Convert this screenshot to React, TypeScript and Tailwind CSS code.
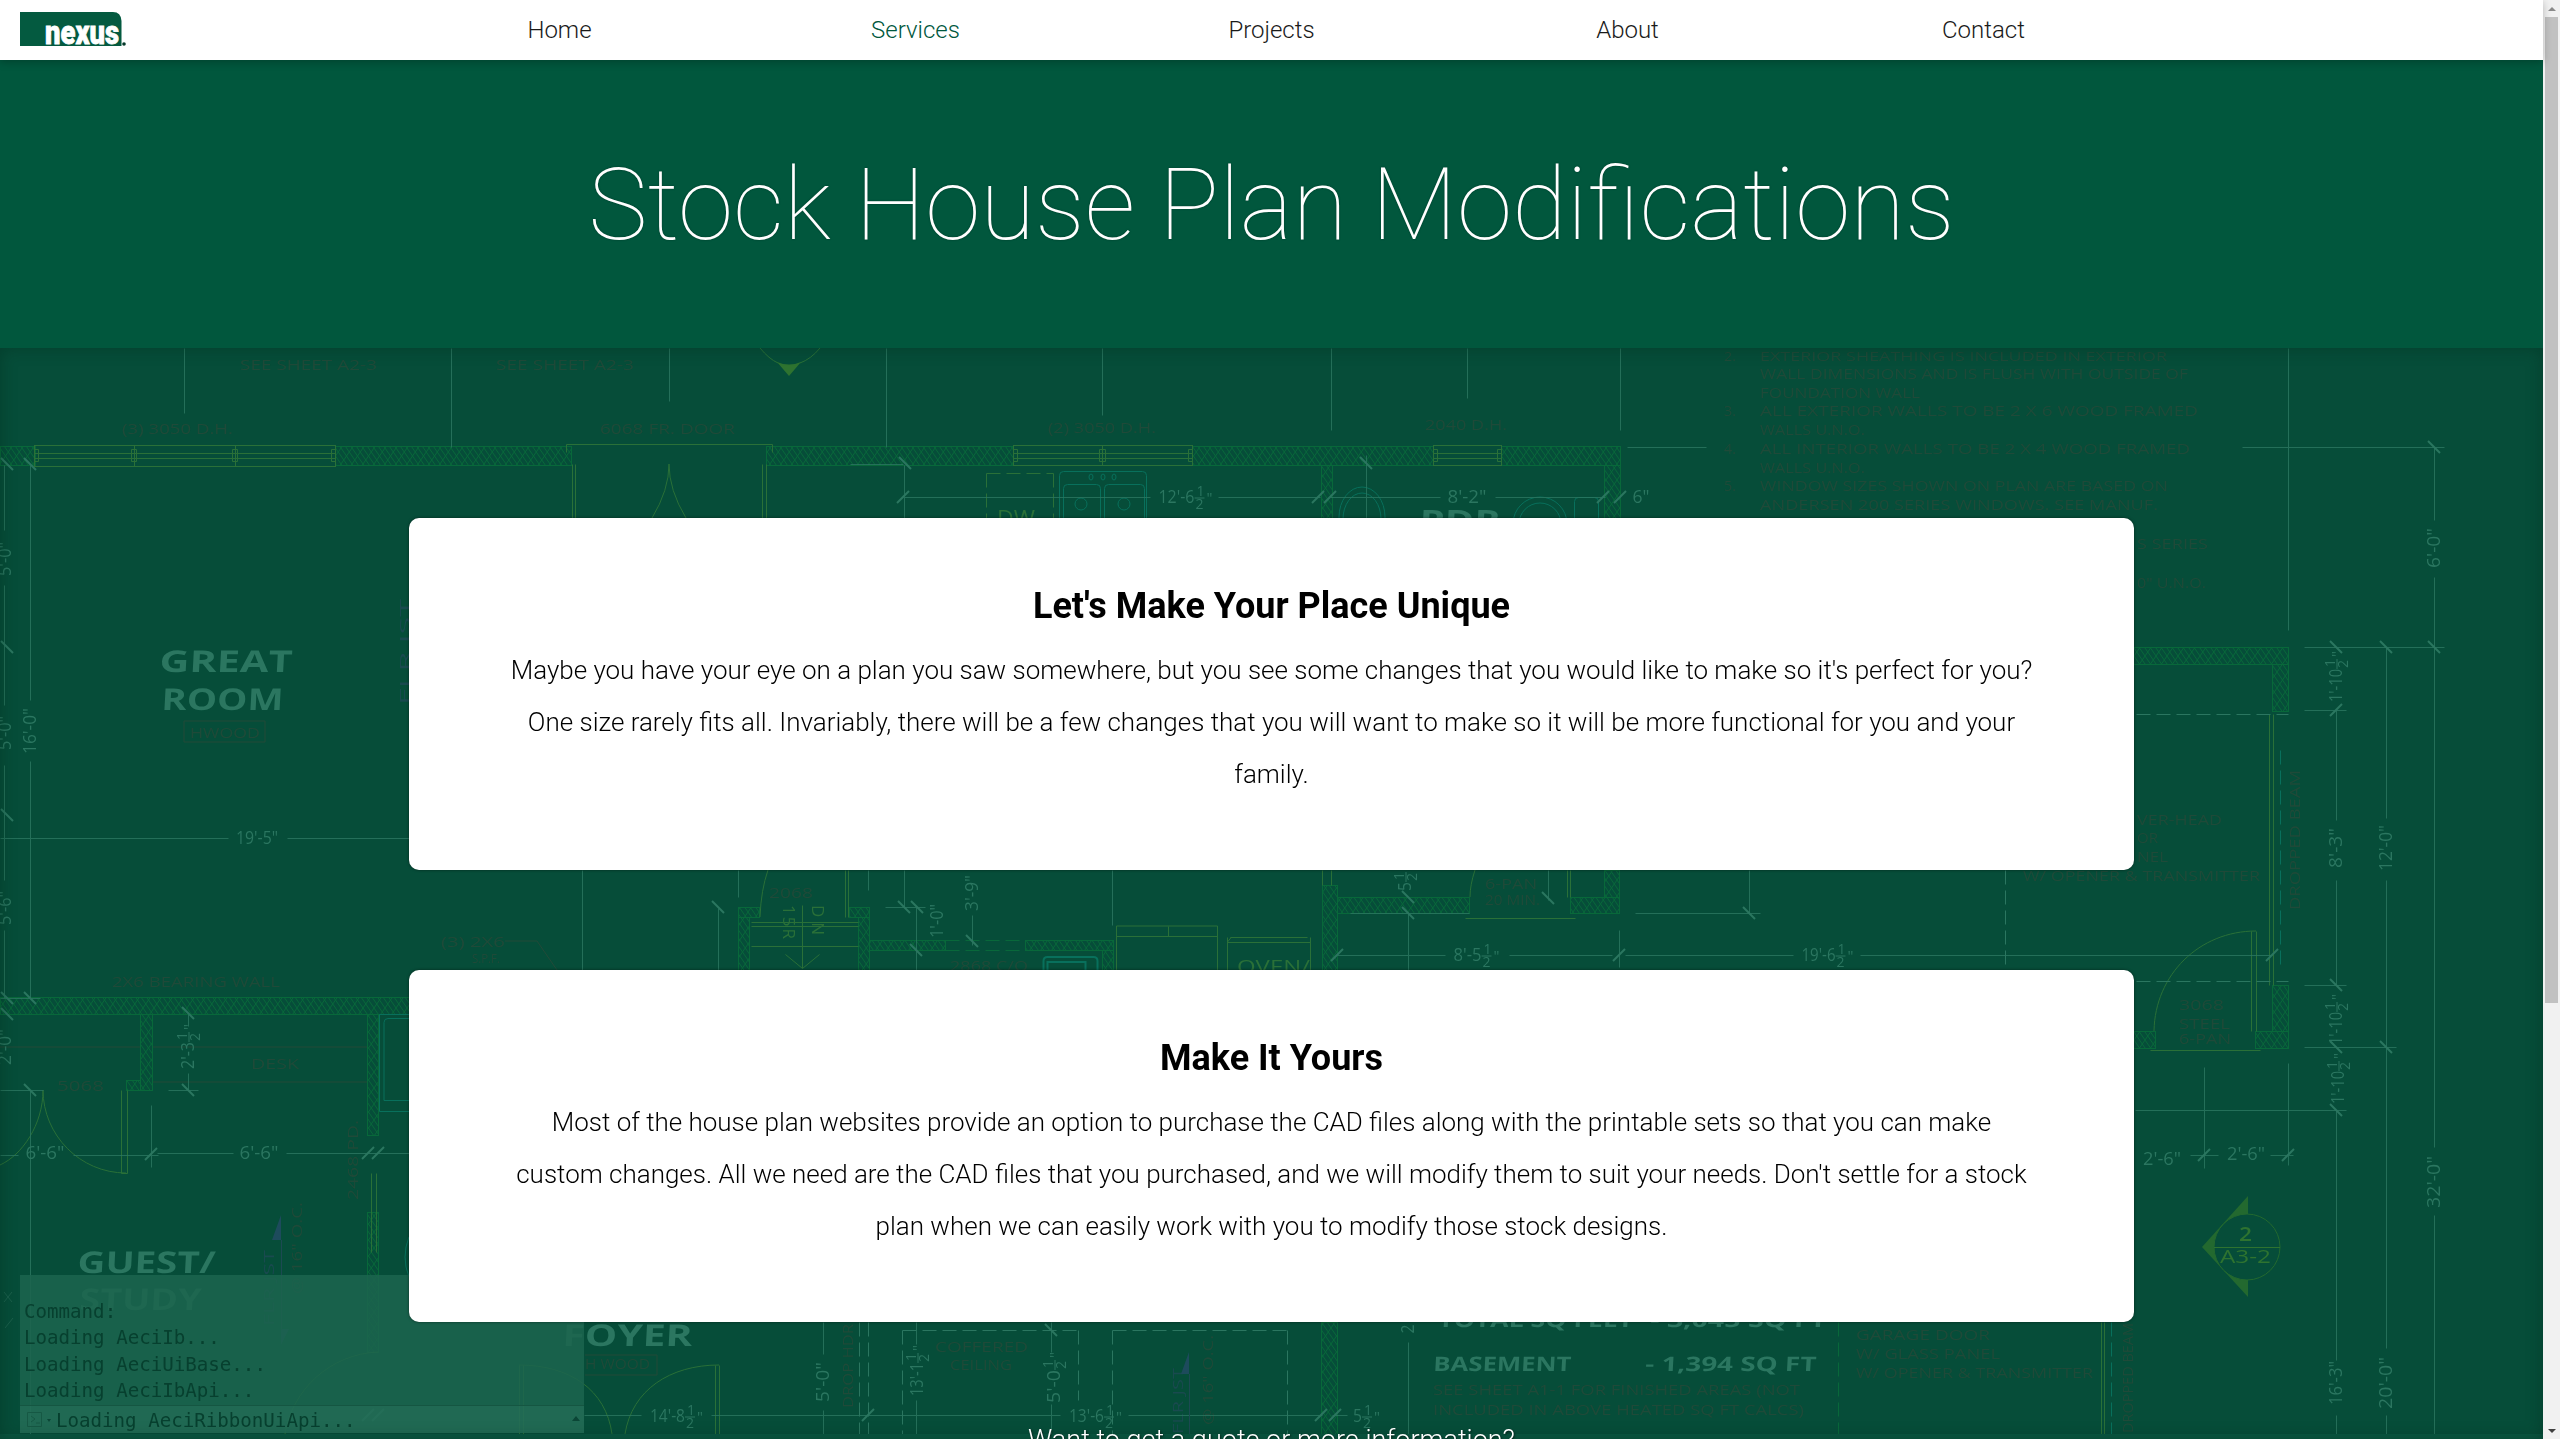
import React from "react";

const DIM = "#2b7660";
const WALL = "#08683a";
const OLIVE = "#2a7038";
const NOTE = "#234a39";
const TEAL = "#08705c";
const BASE = "#064d39";

type Seg = [number, number, number, number];

const dimLines: Seg[] = [
  [184, 348, 184, 413], [451, 348, 451, 447], [669, 348, 669, 401], [886, 348, 886, 447],
  [1102, 348, 1102, 415], [1331, 348, 1331, 430], [1467, 348, 1467, 398], [1620, 348, 1620, 430],
  [1627, 447, 1705, 447], [903, 497, 1150, 497], [1218, 497, 1320, 497], [1330, 497, 1440, 497],
  [1495, 497, 1605, 497], [904, 465, 904, 518], [850, 464, 903, 464], [1366, 455, 1366, 518],
  [30, 465, 30, 700], [30, 761, 30, 998], [4, 465, 4, 530], [4, 585, 4, 705], [4, 765, 4, 880], [4, 930, 4, 998],
  [0, 838, 228, 838], [287, 838, 409, 838], [582, 870, 582, 970], [738, 870, 738, 897], [868, 870, 868, 890],
  [718, 908, 718, 970], [904, 870, 904, 907], [885, 907, 925, 907], [916, 907, 916, 970], [972, 915, 972, 945],
  [1112, 870, 1112, 925], [1548, 870, 1548, 900], [1408, 913, 1408, 970], [1350, 913, 1469, 913],
  [1635, 913, 1760, 913], [1749, 870, 1749, 913], [1337, 955, 1445, 955], [1509, 955, 1612, 955],
  [1625, 955, 1793, 955], [1860, 955, 2272, 955], [1619, 930, 1619, 967],
  [0, 998, 40, 998], [188, 1014, 188, 1026], [188, 1073, 188, 1090], [168, 1090, 198, 1090],
  [0, 1155, 18, 1155], [73, 1155, 158, 1155], [157, 1153, 233, 1153], [286, 1153, 409, 1153], [151, 1105, 151, 1167],
  [30, 1090, 30, 1434], [0, 1090, 43, 1090],
  [584, 1415, 641, 1415], [711, 1415, 1060, 1415], [1128, 1415, 1322, 1415], [1332, 1415, 1347, 1415],
  [823, 1322, 823, 1354], [823, 1410, 823, 1434], [916, 1322, 916, 1344], [916, 1400, 916, 1434],
  [1051, 1322, 1051, 1352], [1051, 1404, 1051, 1434], [1408, 1342, 1408, 1434],
  [1700, 447, 1706, 447], [2242, 447, 2444, 447], [2288, 348, 2288, 630], [2434, 447, 2434, 520], [2434, 577, 2434, 1147],
  [2434, 1215, 2434, 1434], [2304, 647, 2444, 647], [2304, 710, 2346, 710], [2336, 710, 2336, 820],
  [2336, 880, 2336, 985], [2386, 647, 2386, 818], [2386, 880, 2386, 1348], [2386, 1415, 2386, 1434],
  [2304, 985, 2346, 985], [2304, 1047, 2396, 1047], [2135, 1110, 2346, 1110], [2336, 1110, 2336, 1360],
  [2336, 1415, 2336, 1434], [2204, 1067, 2204, 1168], [2288, 1063, 2288, 1165], [2190, 1155, 2218, 1155],
  [2270, 1155, 2293, 1155],
];

/* back-leaning dimension ticks */
const ticksBack: [number, number][] = [
  [905, 463], [1366, 463], [30, 464], [7, 464], [7, 647], [7, 815], [718, 907], [904, 907], [917, 907], [916, 950], [972, 941],
  [1408, 897], [1408, 913], [1548, 898], [1749, 913], [30, 998], [7, 998], [188, 1013], [188, 1090], [30, 1090], [1051, 1330],
  [2434, 447], [2336, 647], [2386, 647], [2434, 647], [2336, 985], [2336, 1047], [2386, 1047], [2336, 1110], [7, 1014],
];

/* forward-leaning dimension ticks */
const ticksFwd: [number, number][] = [
  [903, 497], [1318, 497], [1330, 497], [1603, 497], [1620, 497], [1337, 955], [1619, 955], [2272, 955], [2336, 710],
  [151, 1154], [368, 1153], [378, 1153], [368, 1415], [378, 1415], [868, 1415], [1321, 1415], [1335, 1415], [2204, 1155], [2288, 1155],
];

const walls: Seg[] = [
  [0, 446, 35, 19], [335, 446, 236, 19], [766, 446, 247, 19], [1192, 446, 241, 19], [1501, 446, 119, 19],
  [1321, 465, 11, 53], [1604, 465, 16, 53],
  [738, 907, 21, 10], [738, 917, 11, 53], [849, 907, 20, 10], [858, 917, 11, 53],
  [869, 940, 76, 10], [1025, 940, 88, 10], [1102, 950, 11, 20], [1322, 885, 15, 85],
  [1337, 897, 132, 16], [1570, 897, 49, 16], [1604, 870, 15, 27],
  [0, 997, 409, 17], [140, 1014, 12, 76], [126, 1080, 14, 10], [367, 1014, 11, 121], [367, 1212, 11, 140],
  [1321, 1322, 16, 112], [2130, 647, 158, 17], [2272, 664, 16, 47],
  [2130, 1031, 25, 17], [2255, 1031, 33, 17], [2272, 985, 16, 46],
];

const oliveLines: Seg[] = [
  [34, 453, 335, 453], [34, 458, 335, 458], [134, 445, 134, 466], [235, 445, 235, 466],
  [566, 444, 772, 444], [566, 444, 566, 452], [772, 444, 772, 452],
  [572, 464, 572, 518], [575, 464, 575, 518], [762, 464, 762, 518], [766, 464, 766, 518],
  [1013, 453, 1192, 453], [1013, 458, 1192, 458], [1102, 445, 1102, 465], [1433, 453, 1501, 453], [1433, 458, 1501, 458],
  [845, 870, 845, 917], [848, 870, 848, 917], [751, 922, 858, 922], [751, 926, 858, 926], [751, 946, 858, 946],
  [802, 905, 802, 968], [802, 968, 785, 954], [802, 968, 819, 954],
  [1465, 918, 1575, 918], [1567, 870, 1567, 897], [1570, 870, 1570, 897], [1322, 870, 1322, 885], [1331, 870, 1331, 885],
  [1116, 936, 1217, 936], [1168, 926, 1168, 936], [1227, 942, 1310, 942], [1230, 937, 1307, 937], [1227, 937, 1227, 970], [1310, 937, 1310, 970],
  [121, 1090, 121, 1173], [127, 1090, 127, 1173], [121, 1173, 127, 1173],
  [371, 1173, 371, 1252], [376, 1173, 376, 1252], [519, 1365, 519, 1434], [523, 1365, 523, 1434],
  [715, 1365, 715, 1434], [719, 1365, 719, 1434], [2269, 714, 2269, 985], [2273, 714, 2273, 985],
  [2251, 931, 2251, 1031], [2256, 931, 2256, 1031], [2150, 1050, 2260, 1050],
  [2101, 1322, 2101, 1434], [2104, 1322, 2104, 1434],
];

const dashes: { s: Seg; c: string }[] = [
  { s: [986, 473, 1053, 473], c: OLIVE }, { s: [986, 473, 986, 518], c: OLIVE }, { s: [1053, 473, 1053, 518], c: OLIVE },
  { s: [945, 940, 1025, 940], c: WALL }, { s: [945, 950, 1025, 950], c: WALL },
  { s: [2136, 714, 2288, 714], c: DIM }, { s: [2136, 981, 2288, 981], c: DIM }, { s: [2280, 750, 2280, 970], c: TEAL },
  { s: [2005, 870, 2005, 970], c: DIM }, { s: [1838, 1322, 1838, 1434], c: WALL }, { s: [2111, 1322, 2111, 1434], c: TEAL },
  { s: [859, 1322, 859, 1434], c: DIM }, { s: [868, 1322, 868, 1434], c: DIM },
  { s: [902, 1330, 1078, 1330], c: DIM }, { s: [902, 1330, 902, 1434], c: DIM }, { s: [1078, 1330, 1078, 1400], c: DIM },
  { s: [1112, 1330, 1287, 1330], c: DIM }, { s: [1112, 1330, 1112, 1434], c: DIM }, { s: [1287, 1330, 1287, 1434], c: DIM },
];

/* text, left x, baseline y, width, font size */
type Label = [string, number, number, number, number];

const noteLabels: Label[] = [
  ["SEE SHEET A2-3", 240, 370, 137, 15], ["SEE SHEET A2-3", 496, 370, 138, 15],
  ["(3) 3050 D.H.", 122, 434, 111, 15], ["6068 FR. DOOR", 600, 434, 135, 15],
  ["(2) 3050 D.H.", 1048, 433, 108, 15], ["2040 D.H.", 1425, 430, 82, 15],
  ["HWOOD", 190, 738, 70, 15], ["2068", 769, 898, 44, 15], ["2868 C/O", 950, 971, 78, 15],
  ["6-PAN", 1485, 889, 52, 15], ["20 MIN.", 1485, 905, 55, 15],
  ["(3) 2X6", 441, 947, 64, 15], ["S.P.F.", 472, 963, 28, 13], ["2X6 BEARING WALL", 112, 987, 168, 15],
  ["DESK", 251, 1069, 48, 15], ["5068", 57, 1091, 47, 15], ["H WOOD", 585, 1369, 65, 15],
  ["COFFERED", 935, 1352, 93, 15], ["CEILING", 950, 1370, 62, 15],
  ["SEE SHEET A1-1 FOR FINISHED AREAS (NOT", 1433, 1395, 367, 15],
  ["INCLUDED IN ABOVE HEATED SQ FT CALCS)", 1433, 1415, 371, 15],
  ["GARAGE DOOR", 1856, 1340, 134, 15], ["W/ GLASS PANEL", 1856, 1359, 144, 15], ["W/ OPENER & TRANSMITTER", 1856, 1378, 237, 15],
  ["2.", 1724, 361, 12, 13], ["EXTERIOR SHEATHING IS INCLUDED IN EXTERIOR", 1760, 361, 407, 13],
  ["WALL DIMENSIONS AND IS FLUSH WITH OUTSIDE OF", 1760, 379, 428, 15], ["FOUNDATION WALL", 1760, 398, 160, 15],
  ["3.", 1724, 416, 12, 15], ["ALL EXTERIOR WALLS TO BE 2 X 6 WOOD FRAMED", 1760, 416, 438, 15], ["WALLS U.N.O.", 1760, 435, 105, 15],
  ["4.", 1724, 454, 12, 15], ["ALL INTERIOR WALLS TO BE 2 X 4 WOOD FRAMED", 1760, 454, 430, 15], ["WALLS U.N.O.", 1760, 473, 105, 15],
  ["5.", 1724, 491, 12, 15], ["WINDOW SIZES SHOWN ON PLAN ARE BASED ON", 1760, 491, 408, 15],
  ["ANDERSEN 200 SERIES WINDOWS.  SEE MANUF.", 1760, 510, 398, 15],
  ["S SERIES", 2137, 549, 71, 15], ["0\" U.N.O.", 2137, 588, 69, 15],
  ["VER-HEAD", 2137, 825, 85, 15], ["OR", 2137, 843, 21, 15], ["NEL", 2137, 862, 31, 15],
  ["W/ OPENER & TRANSMITTER", 2023, 881, 237, 15],
  ["3068", 2179, 1010, 45, 15], ["STEEL", 2179, 1029, 51, 15], ["6-PAN", 2179, 1044, 52, 15],
];

const roomLabels: Label[] = [
  ["GREAT", 159, 672, 133, 30], ["ROOM", 161, 710, 122, 30], ["GUEST/", 77, 1273, 138, 30], ["STUDY", 79, 1310, 122, 30],
  ["FOYER", 562, 1346, 130, 30], ["PDR", 1419, 530, 81, 28],
  ["TOTAL SQ FEET", 1438, 1327, 195, 20], ["- 3,045 SQ FT", 1650, 1327, 176, 20],
  ["BASEMENT", 1433, 1371, 138, 20], ["- 1,394 SQ FT", 1645, 1371, 171, 20],
];

/* text, centre x, centre y, length, rotated */
type Dim = [string, number, number, number, boolean];

const dimLabels: Dim[] = [
  ["8'-2\"", 1467, 497, 39, false], ["6\"", 1641, 497, 17, false], ["19'-5\"", 257, 838, 42, false],
  ["6'-6\"", 45, 1153, 39, false], ["6'-6\"", 259, 1153, 39, false], ["2'-6\"", 2162, 1159, 38, false], ["2'-6\"", 2246, 1154, 38, false],
  ["16'-0\"", 30, 731, 46, true], ["5'-0\"", 5, 559, 34, true], ["5'-0\"", 5, 733, 34, true], ["5'-6\"", 5, 908, 34, true], ["2'-0\"", 5, 1047, 36, true],
  ["3'-9\"", 972, 893, 36, true], ["1'-0\"", 937, 921, 34, true], ["5'-0\"", 823, 1382, 40, true],
  ["6'-0\"", 2434, 548, 40, true], ["8'-3\"", 2336, 848, 40, true], ["12'-0\"", 2386, 848, 46, true], ["32'-0\"", 2434, 1182, 52, true],
  ["16'-3\"", 2336, 1383, 44, true], ["20'-0\"", 2386, 1383, 52, true], ["2", 1408, 1329, 9, true],
];

/* dimensions ending in one half: whole part, centre x, centre y, total length, rotated */
const halfLabels: Dim[] = [
  ["12'-6", 1185, 497, 53, false], ["8'-5", 1476, 955, 45, false], ["19'-6", 1827, 955, 51, false], ["14'-8", 676, 1416, 52, false],
  ["13'-6", 1095, 1416, 52, false], ["5", 1366, 1416, 26, false],
  ["2'-3", 188, 1047, 44, true], ["13'-1", 917, 1371, 50, true], ["5'-0", 1054, 1378, 50, true],
  ["1'-10", 2336, 677, 50, true], ["1'-10", 2336, 1020, 50, true], ["1'-10", 2338, 1079, 50, true], ["5", 1405, 878, 26, true],
];

const vertNotes: { t: string; x: number; y: number; w: number; c: string }[] = [
  { t: "FLR JST", x: 405, y: 652, w: 106, c: "#1c4a52" },
  { t: "2468 PD.", x: 353, y: 1160, w: 80, c: NOTE },
  { t: "FLR JST", x: 269, y: 1288, w: 76, c: "#1c4a52" },
  { t: "@ 16\" O.C.", x: 297, y: 1248, w: 92, c: NOTE },
  { t: "DROP HDR", x: 848, y: 1366, w: 84, c: NOTE },
  { t: "FLR JST", x: 1178, y: 1401, w: 66, c: "#1c4a52" },
  { t: "@ 16\" O.C.", x: 1208, y: 1380, w: 90, c: NOTE },
  { t: "DROPPED BEAM", x: 2295, y: 840, w: 140, c: NOTE },
  { t: "DROPPED BEAM", x: 2128, y: 1378, w: 110, c: NOTE },
];

const consoleLines: [string, number, number][] = [
  ["Command:", 24, 1318], ["Loading AeciIb...", 24, 1344], ["Loading AeciUiBase...", 24, 1371],
  ["Loading AeciIbApi...", 24, 1397], ["Loading AeciRibbonUiApi...", 56, 1427],
];

function HalfDim({ d }: { d: Dim }) {
  const [t, cx, cy, len, rot] = d;
  const whole = len - 17;
  return (
    <g transform={`translate(${cx} ${cy})${rot ? " rotate(-90)" : ""}`} fill={DIM}>
      <text x={-len / 2} y={6} fontSize={18} textLength={whole} lengthAdjust="spacingAndGlyphs">{t}</text>
      <text x={len / 2 - 15} y={-1} fontSize={14}>1</text>
      <path d={`M${len / 2 - 17} 1h10`} stroke={DIM} />
      <text x={len / 2 - 16} y={12} fontSize={14}>2</text>
      <text x={len / 2 - 5} y={6} fontSize={15}>"</text>
    </g>
  );
}

function Blueprint() {
  return (
    <svg className="absolute inset-0 h-full w-full" viewBox="0 348 2543 1091" preserveAspectRatio="none" fontFamily='"Open Sans", "Noto Sans", sans-serif' fill="none">
      <defs>
        <pattern id="hatch" width="11" height="16" patternUnits="userSpaceOnUse">
          <path d="M0 0l11 16M11 0L0 16M5.5 0l11 16M-5.500 0l11 16" stroke={WALL} strokeWidth="1" />
        </pattern>
      </defs>

      <g fill={NOTE} opacity="0.9">
        {noteLabels.map(([t, x, y, w, s], i) => (
          <text key={i} x={x} y={y} fontSize={s} textLength={w} lengthAdjust="spacingAndGlyphs">{t}</text>
        ))}
        {vertNotes.map((n, i) => (
          <text key={i} transform={`translate(${n.x + 5} ${n.y}) rotate(-90)`} x={-n.w / 2} fontSize={15} fill={n.c} textLength={n.w} lengthAdjust="spacingAndGlyphs">{n.t}</text>
        ))}
      </g>
      <path d="M184 721h81v21h-81zM585 1355h72v20h-72M0 1047h140M152 1047h215M152 1082h215M505 941h32l20 29" stroke={NOTE} />

      {walls.map(([x, y, w, h], i) => (
        <rect key={i} x={x + 0.5} y={y + 0.5} width={w} height={h} fill="url(#hatch)" stroke={WALL} />
      ))}

      <g stroke={OLIVE}>
        {oliveLines.map(([a, b, c, d], i) => <path key={i} d={`M${a + 0.5} ${b + 0.5}L${c + 0.5} ${d + 0.5}`} />)}
        <rect x="34.500" y="445.500" width="301" height="21" />
        <rect x="1013.500" y="445.500" width="179" height="20" />
        <rect x="1433.500" y="445.500" width="68" height="20" />
        <path d="M131.500 449.500h5v12h-5zM232.500 449.500h5v12h-5zM34.500 449.500h4v12h-4zM331.500 449.500h4v12h-4zM1099.500 449.500h6v12h-6zM1013.500 449.500h4v12h-4zM1188.500 449.500h4v12h-4zM1433.500 449.500h4v12h-4zM1497.500 449.500h4v12h-4z" />
        <path d="M1116.500 970v-44h101v44M1227.500 942l4-5" />
        <path d="M669 464Q669 490 652 518M669 464Q669 490 686 518" />
        <path d="M768 870Q761 890 760 917M1475 870Q1470 885 1470 897" />
        <path d="M43 1090C43 1125 22 1155 0 1165M43 1090C43 1135 80 1173 126 1173" />
        <path d="M378 1352C330 1354 292 1390 285 1434" />
        <path d="M519 1365C570 1365 606 1390 612 1434M719 1365C670 1365 632 1390 625 1434" />
        <path d="M2256 931C2199 931 2155 975 2154 1031" />
        <path d="M760 348q9 11 18 15M820 348q-9 11 -20 15" />
      </g>
      <g stroke="none" fontSize="21" fill={OLIVE}>
        <text x="997" y="526" textLength="38" lengthAdjust="spacingAndGlyphs">DW</text>
        <text x="1237" y="973" textLength="73" lengthAdjust="spacingAndGlyphs" fontSize="19">OVEN/</text>
        <g transform="rotate(90 817 905)"><text x="817" y="910" textLength="30" fontSize="17">DN</text></g>
        <g transform="rotate(90 788 905)"><text x="788" y="910" textLength="34" fontSize="17">15R</text></g>
      </g>

      <g stroke={TEAL}>
        <rect x="1059.500" y="471.500" width="87" height="60" rx="4" />
        <rect x="1063.500" y="484.500" width="37" height="50" rx="4" />
        <rect x="1104.500" y="484.500" width="40" height="50" rx="4" />
        <circle cx="1081" cy="504" r="6" />
        <circle cx="1124" cy="504" r="6" />
        <ellipse cx="1091" cy="477" rx="2" ry="3" />
        <ellipse cx="1103" cy="477" rx="2" ry="3" />
        <ellipse cx="1114" cy="477" rx="2" ry="3" />
        <ellipse cx="1362" cy="517" rx="23" ry="30" />
        <ellipse cx="1362" cy="519" rx="19" ry="26" />
        <circle cx="1540" cy="524" r="27" />
        <circle cx="1540" cy="524" r="21" />
        <rect x="1574.500" y="497.500" width="24" height="40" rx="4" />
        <path d="M1043.500 970v-9q0-4 4-4h46q4 0 4 4v9M1047.500 970v-8h38v8" strokeWidth="2" />
        <path d="M409 1014.500h-29.500v97h29.500M409 1018.500h-21q-4 0-4 4v78h25" />
        <path d="M409 1237q-8 20 0 40" />
      </g>

      {dashes.map(({ s, c }, i) => (
        <path key={i} d={`M${s[0] + 0.5} ${s[1] + 0.5}L${s[2] + 0.5} ${s[3] + 0.5}`} stroke={c} strokeDasharray="14 6" />
      ))}

      <g stroke={DIM} strokeWidth="1" opacity="0.85">
        {dimLines.map(([a, b, c, d], i) => <path key={i} d={`M${a + 0.5} ${b + 0.5}L${c + 0.5} ${d + 0.5}`} />)}
      </g>
      <g stroke={DIM} strokeWidth="2">
        {ticksBack.map(([x, y], i) => <path key={i} d={`M${x - 6} ${y - 6}l12 12`} />)}
        {ticksFwd.map(([x, y], i) => <path key={i} d={`M${x - 6} ${y + 6}l12 -12`} />)}
      </g>

      <g fill={DIM}>
        {dimLabels.map(([t, x, y, w, rot], i) => (
          <text key={i} transform={`translate(${x} ${y})${rot ? " rotate(-90)" : ""}`} x={-w / 2} y={6} fontSize={18} textLength={w} lengthAdjust="spacingAndGlyphs">{t}</text>
        ))}
      </g>
      {halfLabels.map((d, i) => <HalfDim key={i} d={d} />)}
      <g fill={DIM} fontFamily='"Open Sans", sans-serif' fontWeight="700">
        {roomLabels.map(([t, x, y, w, s], i) => (
          <g key={i} transform={`translate(${x} ${y}) skewX(-3)`}>
            <text fontSize={s} textLength={w} lengthAdjust="spacingAndGlyphs">{t}</text>
          </g>
        ))}
      </g>

      <g fill="#1d4b5c">
        <path d="M281 1215v25h-9zM1189 1352v22h-8zM281 1345v-16h8z" />
        <path d="M281.500 1240v90M1189.500 1374v65" stroke="#1c4a52" />
      </g>

      <g>
        <path d="M777 362q12 5 24 0l-12 14z" fill="#2e7330" />
        <path d="M2248 1196L2202 1247L2248 1297z" fill="#23692f" />
        <circle cx="2247" cy="1247" r="33" fill={BASE} stroke="#23692f" />
        <path d="M2214 1247.500h66" stroke="#2e7330" />
        <text x="2239" y="1241" fontSize="19" fontWeight="600" fill="#2e7330" textLength="13" lengthAdjust="spacingAndGlyphs">2</text>
        <text x="2220" y="1263" fontSize="18" fill="#2e7330" textLength="51" lengthAdjust="spacingAndGlyphs">A3-2</text>
      </g>

      <rect x="20" y="1275" width="564" height="130" fill="#1c644e" opacity="0.86" />
      <rect x="20" y="1405" width="564" height="28" fill="#236d56" opacity="0.9" />
      <path d="M20 1405.500h564" stroke="#155642" />
      <path d="M572 1421l4-5 4 5zM47 1419h4l-2 3z" fill="#0b4636" />
      <path d="M27.500 1412.500h14v14h-14zM31 1416l4 3-4 3M36 1423h4" stroke="#165844" />
      <path d="M4 1292l8 10M12 1292l-8 10M5 1328l8-10" stroke="#1c604c" />
      <g fill="#07402f" fontFamily='"DejaVu Sans Mono", "Liberation Mono", monospace' fontSize="19.500">
        {consoleLines.map(([t, x, y]) => (
          <text key={t} x={x} y={y} textLength={t.length * 11.52} lengthAdjust="spacingAndGlyphs">{t}</text>
        ))}
      </g>
      <rect x="0" y="1434" width="2543" height="5" fill="#0a5742" />
    </svg>
  );
}

function Logo() {
  return (
    <svg className="overflow-visible" width="108" height="36" viewBox="0 0 108 36" aria-label="nexus">
      <path d="M0 0h93q8 0 8.500 9v25H0z" fill="#045a40" />
      <text x="25" y="32" fontFamily='"Roboto", sans-serif' fontWeight="900" fontSize="33" textLength="74" lengthAdjust="spacingAndGlyphs" fill="#fff" stroke="#fff" strokeWidth="0.800">nexus</text>
      <circle cx="104" cy="32" r="1.800" fill="#04382a" />
    </svg>
  );
}

const nav = ["Home", "Services", "Projects", "About", "Contact"];

function Card({ title, lines }: { title: string; lines: string[] }) {
  return (
    <article className="h-[352px] w-[1725px] rounded-[10px] bg-white px-[90px] pt-[67px] text-center text-black shadow-[0_0_3px_rgba(0,0,0,0.5)]">
      <h2 className="mb-[17px] text-[36px] leading-[42px] font-bold">{title}</h2>
      <p className="text-[25.980px] leading-[52px] font-light whitespace-nowrap">
        {lines.map((l) => <span key={l} className="block">{l}</span>)}
      </p>
    </article>
  );
}

export default function App() {
  return (
    <div className="flex h-[1439px] w-[2560px] overflow-hidden bg-white font-['Roboto',sans-serif]">
      <div className="flex w-[2543px] flex-col">
        <header className="relative z-10 flex h-[60px] shrink-0 items-center justify-center bg-white shadow-[0_2px_8px_rgba(0,0,0,0.25)]">
          <div className="absolute top-[12px] left-[20px]"><Logo /></div>
          <nav className="grid w-[1780px] grid-cols-5 text-center text-[24px] leading-[60px] font-light text-[#1a1a1a]">
            {nav.map((n) => <a key={n} className={n === "Services" ? "text-[#00573d]" : ""}>{n}</a>)}
          </nav>
        </header>
        <div className="flex h-[288px] shrink-0 items-center justify-center bg-[#01573d]">
          <h1 className="text-[100px] leading-[117px] font-thin whitespace-nowrap text-white [text-shadow:0_0_2px_rgba(0,0,0,0.35)]">
            Stock House Plan Modifications
          </h1>
        </div>
        <main className="relative h-[1091px] overflow-hidden bg-[#064d39]">
          <Blueprint />
          <div className="absolute inset-0 shadow-[inset_0_0_16px_rgba(0,40,25,0.4)]" />
          <div className="relative flex flex-col items-center pt-[170px]">
            <Card
              title="Let's Make Your Place Unique"
              lines={[
                "Maybe you have your eye on a plan you saw somewhere, but you see some changes that you would like to make so it's perfect for you?",
                "One size rarely fits all. Invariably, there will be a few changes that you will want to make so it will be more functional for you and your",
                "family.",
              ]}
            />
            <div className="mt-[100px]">
              <Card
                title="Make It Yours"
                lines={[
                  "Most of the house plan websites provide an option to purchase the CAD files along with the printable sets so that you can make",
                  "custom changes. All we need are the CAD files that you purchased, and we will modify them to suit your needs. Don't settle for a stock",
                  "plan when we can easily work with you to modify those stock designs.",
                ]}
              />
            </div>
            <p className="mt-[92px] text-[27px] leading-[52px] font-light whitespace-nowrap text-white [text-shadow:1px_1px_2px_rgba(0,0,0,0.6)]">Want to get a quote or more information?</p>
          </div>
        </main>
      </div>
      <div className="flex w-[17px] shrink-0 flex-col items-center bg-[#f1f1f1]">
        <div className="flex h-[17px] items-center">
          <div className="border-x-[4px] border-b-[4px] border-x-transparent border-b-[#8a8a8a]" />
        </div>
        <div className="h-[986px] w-[13px] bg-[#c1c1c1]" />
        <div className="mt-auto flex h-[17px] items-center">
          <div className="border-x-[4px] border-t-[4px] border-x-transparent border-t-[#404040]" />
        </div>
      </div>
    </div>
  );
}
